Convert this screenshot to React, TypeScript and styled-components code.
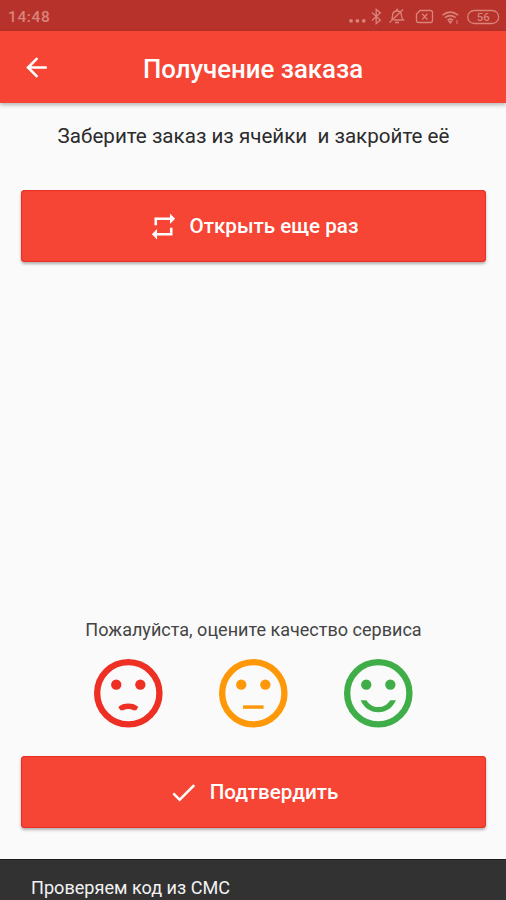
import React from "react";
import styled, { createGlobalStyle } from "styled-components";

const GlobalStyle = createGlobalStyle`
  * { box-sizing: border-box; }
  html, body { margin: 0; padding: 0; height: 100%; overflow: hidden; }
  body { font-family: Roboto, "Liberation Sans", sans-serif; background: #fafafa; }
`;

const Screen = styled.div`
  width: 506px;
  height: 900px;
  display: flex;
  flex-direction: column;
  background: #fafafa;
  overflow: hidden;
`;

const StatusBar = styled.div`
  flex: none;
  height: 31px;
  padding: 2px 6px 0 8px;
  display: flex;
  align-items: center;
  justify-content: space-between;
  background: #b7322a;
  color: #d9837b;
`;

const Clock = styled.span`
  font-size: 15.5px;
  font-weight: 500;
  letter-spacing: 0.6px;
`;

const StatusIcons = styled.svg`
  display: block;
  width: 152px;
  height: 20px;
`;

const AppBar = styled.header`
  flex: none;
  height: 72px;
  display: grid;
  grid-template-columns: 72px 1fr 72px;
  align-items: center;
  background: #f64435;
  box-shadow: 0 2px 4px rgba(0, 0, 0, 0.28);
  color: #fff;
`;

const BackButton = styled.button`
  display: flex;
  width: 72px;
  padding: 0 0 0 1px;
  justify-content: center;
  border: 0;
  background: none;
  color: inherit;
`;

const Icon = styled.svg<{ $size: number }>`
  display: block;
  flex: none;
  width: ${(p) => p.$size}px;
  height: ${(p) => p.$size}px;
  fill: currentColor;
`;

const Title = styled.h1`
  margin: 0;
  padding-top: 3px;
  text-align: center;
  white-space: nowrap;
  font-size: 25.8px;
  line-height: 30px;
  font-weight: 500;
`;

const Content = styled.main`
  flex: 1;
  display: flex;
  flex-direction: column;
  padding: 20px 20px 31px 21px;
`;

const Instruction = styled.p`
  margin: 0 0 41px;
  text-align: center;
  white-space: pre;
  font-size: 20.6px;
  line-height: 26px;
  color: #2b2b2b;
`;

const ActionButton = styled.button`
  flex: none;
  height: 72px;
  display: flex;
  align-items: center;
  justify-content: center;
  gap: 11px;
  padding: 0 1px 0 0;
  border: 0;
  border-radius: 4px;
  background: #f64435;
  box-shadow: 0 2px 3px rgba(0, 0, 0, 0.3), inset 0 0 1px 1px #e93024;
  color: #fff;
  font-family: inherit;
  font-size: 20.6px;
  font-weight: 500;
`;

const Spacer = styled.div`
  flex: 1;
`;

const Question = styled.p`
  margin: 0 0 10px;
  text-align: center;
  white-space: nowrap;
  font-size: 18.05px;
  line-height: 24px;
  color: #444;
`;

const Ratings = styled.div`
  display: flex;
  justify-content: center;
  gap: 42.4px;
  margin-bottom: 21.4px;
`;

const Face = styled.button<{ $color: string }>`
  padding: 0;
  border: 0;
  background: none;
  color: ${(p) => p.$color};
`;

const Snackbar = styled.div`
  flex: none;
  height: 41px;
  padding: 16px 31px 0;
  border-top: 1px solid #1c1c1c;
  background: #323232;
  color: #f2f2f2;
  font-size: 18.1px;
  line-height: 24px;
  white-space: nowrap;
`;

const mouths = {
  sad: <path d="M9.1 16Q10.2 15 12 15T14.9 16L14.3 16.9H13.500Q12 16.2 10.500 16.9H9.700z" />,
  neutral: <path d="M9 15.5h6v1H9z" />,
  happy: (
    <path d="M12 16c-1.48 0-2.75-.81-3.45-2H6.88c.8 2.05 2.79 3.5 5.12 3.5s4.32-1.45 5.12-3.5h-1.67c-.7 1.19-1.97 2-3.45 2z" />
  ),
};

function Rating({ mood, color, label }: { mood: keyof typeof mouths; color: string; label: string }) {
  return (
    <Face $color={color} aria-label={label}>
      <Icon $size={82.6} viewBox="0 0 24 24">
        <circle cx="12" cy="12" r="9.05" fill="none" stroke="currentColor" strokeWidth="1.85" />
        <circle cx="8.5" cy="9.5" r="1.5" />
        <circle cx="15.5" cy="9.5" r="1.5" />
        {mouths[mood]}
      </Icon>
    </Face>
  );
}

function DeviceStatus() {
  return (
    <StatusIcons viewBox="348 6 152 20" fill="none" stroke="currentColor" strokeWidth="1.3">
      <g fill="currentColor" stroke="none">
        <circle cx="351" cy="19.8" r="1.9" />
        <circle cx="357.4" cy="19.8" r="1.9" />
        <circle cx="363.8" cy="19.8" r="1.9" />
      </g>
      <path d="M372 11.6l8.4 7.6-4.2 3.4V8.4l4.2 3.4-8.4 7.6" />
      <path d="M391.5 18.5c1.300-1.500.9-3 1-4.300.2-2.800 2-4.200 4.500-4.200 3 0 4.300 2 4.500 4.500.1 2 .3 3 1.800 4.500h-9.500M396.200 8.500h1.800M395 21.500h4M389.500 21.500l13.500-13" />
      <path d="M420 9.500h10.500q2 0 2 2v8q0 2-2 2h-12q-2 0-2-2v-6.500zM422.200 12.800l5.200 5.800M427.400 12.800l-5.200 5.800" />
      <path d="M442.500 14.200q7.800-6 15.600 0M445 16.700q5.300-4.200 10.600 0M447.600 19.200q2.700-2 5.400 0" strokeWidth="1.7" />
      <path d="M448.500 20.200h3.600l-1.800 2.300zM457 19v4" fill="currentColor" strokeWidth="0.9" />
      <rect x="467.700" y="9.500" width="31" height="13" rx="6.5" />
      <text x="483.200" y="20" textAnchor="middle" fontSize="11.5" fontWeight="500" fill="currentColor" stroke="none">
        56
      </text>
    </StatusIcons>
  );
}

export default function App() {
  return (
    <>
      <GlobalStyle />
      <Screen>
        <StatusBar>
          <Clock>14:48</Clock>
          <DeviceStatus />
        </StatusBar>
        <AppBar>
          <BackButton aria-label="Назад">
            <Icon $size={31} viewBox="0 0 24 24">
              <path d="M20 11H7.83l5.59-5.59L12 4l-8 8 8 8 1.41-1.41L7.83 13H20v-2z" />
            </Icon>
          </BackButton>
          <Title>Получение заказа</Title>
        </AppBar>
        <Content>
          <Instruction>{"Заберите заказ из ячейки  и закройте её"}</Instruction>
          <ActionButton>
            <Icon $size={31} viewBox="0 0 24 24">
              <path d="M7 7h10v3l4-4-4-4v3H5v6h2V7zm10 10H7v-3l-4 4 4 4v-3h12v-6h-2v4z" />
            </Icon>
            Открыть еще раз
          </ActionButton>
          <Spacer />
          <Question>Пожалуйста, оцените качество сервиса</Question>
          <Ratings>
            <Rating mood="sad" color="#ee2f24" label="Плохо" />
            <Rating mood="neutral" color="#ff9808" label="Нормально" />
            <Rating mood="happy" color="#3fae49" label="Отлично" />
          </Ratings>
          <ActionButton>
            <Icon $size={31} viewBox="0 0 24 24">
              <path d="M9 16.17L4.83 12l-1.42 1.41L9 19 21 7l-1.41-1.41z" />
            </Icon>
            Подтвердить
          </ActionButton>
        </Content>
        <Snackbar>Проверяем код из СМС</Snackbar>
      </Screen>
    </>
  );
}
